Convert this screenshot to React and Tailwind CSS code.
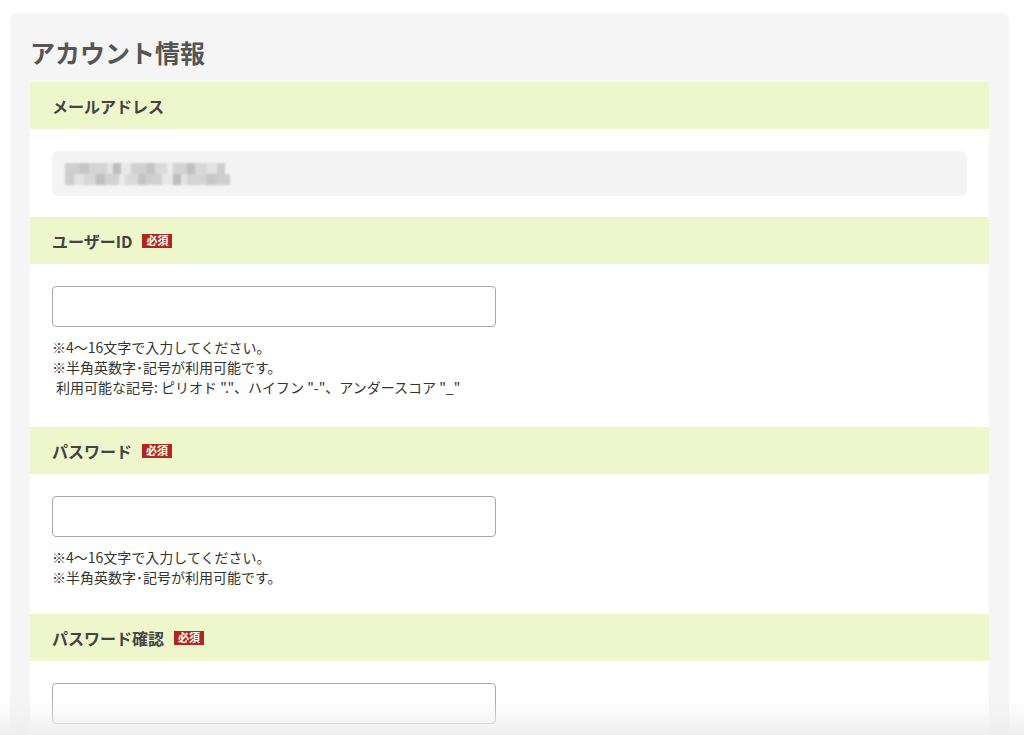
const FONT = { fontFamily: '"Noto Sans CJK JP", "Noto Sans", sans-serif' };

function Badge() {
  return (
    <span className="ml-[10px] inline-flex h-[14px] w-[30px] items-center justify-center bg-[#b3261e] text-[11px] font-bold leading-none text-white">
      必須
    </span>
  );
}

function SectionHead({ label, required }) {
  return (
    <div className="flex h-[47px] items-center bg-[#eef6cc] px-[22px]">
      <span className="text-[16px] font-bold text-[#444]">{label}</span>
      {required && <Badge />}
    </div>
  );
}

function Notes({ lines }) {
  return (
    <div className="mt-[10px] text-[14px] leading-[20px] text-[#333]">
      {lines.map((l, i) => (
        <div key={i} className={l.indent ? "pl-[4px]" : ""}>
          {l.text}
        </div>
      ))}
    </div>
  );
}

function TextField() {
  return (
    <input
      type="text"
      className="block h-[41px] w-[444px] rounded-[4px] border border-[#a9a9a9] bg-white px-3 text-[14px] outline-none"
    />
  );
}

const BLOCKS = [
  [14, "#cfcfcf"], [10, "#c6c6c6"], [18, "#d4d4d4"], [6, "#e4e4e4"], [8, "#bdbdbd"],
  [10, "#e8e8e8"], [16, "#d0d0d0"], [8, "#c4c4c4"], [12, "#dadada"], [6, "#ebebeb"],
  [14, "#d2d2d2"], [8, "#c0c0c0"], [12, "#d8d8d8"], [10, "#e2e2e2"], [8, "#cdcdcd"],
];

export default function App() {
  const idNotes = [
    { text: "※4〜16文字で入力してください。" },
    { text: "※半角英数字･記号が利用可能です。" },
    { text: "利用可能な記号: ピリオド \".\"、ハイフン \"-\"、アンダースコア \"_\"", indent: true },
  ];
  const pwNotes = [
    { text: "※4〜16文字で入力してください。" },
    { text: "※半角英数字･記号が利用可能です。" },
  ];

  return (
    <div className="relative h-[735px] overflow-hidden bg-white pt-[13px] pl-[10px] pr-[15px]" style={FONT}>
      <div className="rounded-[8px] bg-[#f5f5f5] px-[20px] pb-[20px]">
        <h1 className="pt-[22px] pb-[13px] text-[25px] font-bold leading-[34px] text-[#555]">アカウント情報</h1>

        <div className="bg-white">
          <SectionHead label="メールアドレス" />
          <div className="px-[22px] pt-[22px] pb-[21px]">
            <div className="flex h-[45px] items-center rounded-[6px] bg-[#f4f4f4] px-[13px]">
              <div className="flex h-[22px] flex-col blur-[1px]">
                <div className="flex h-[11px]">
                  {BLOCKS.map(([w, c], i) => (
                    <div key={i} style={{ width: w, background: c }} />
                  ))}
                </div>
                <div className="flex h-[11px]">
                  {BLOCKS.slice().reverse().map(([w, c], i) => (
                    <div key={i} style={{ width: w + (i % 3 === 0 ? 1 : 0), background: c }} />
                  ))}
                </div>
              </div>
            </div>
          </div>

          <SectionHead label="ユーザーID" required />
          <div className="px-[22px] pt-[22px] pb-[30px]">
            <TextField />
            <Notes lines={idNotes} />
          </div>

          <SectionHead label="パスワード" required />
          <div className="px-[22px] pt-[22px] pb-[27px]">
            <TextField />
            <Notes lines={pwNotes} />
          </div>

          <SectionHead label="パスワード確認" required />
          <div className="px-[22px] pt-[22px] pb-[22px]">
            <TextField />
          </div>
        </div>
      </div>

      <div className="pointer-events-none absolute bottom-0 left-0 right-0 h-[35px] bg-gradient-to-b from-transparent to-[#efefef]" />
    </div>
  );
}
